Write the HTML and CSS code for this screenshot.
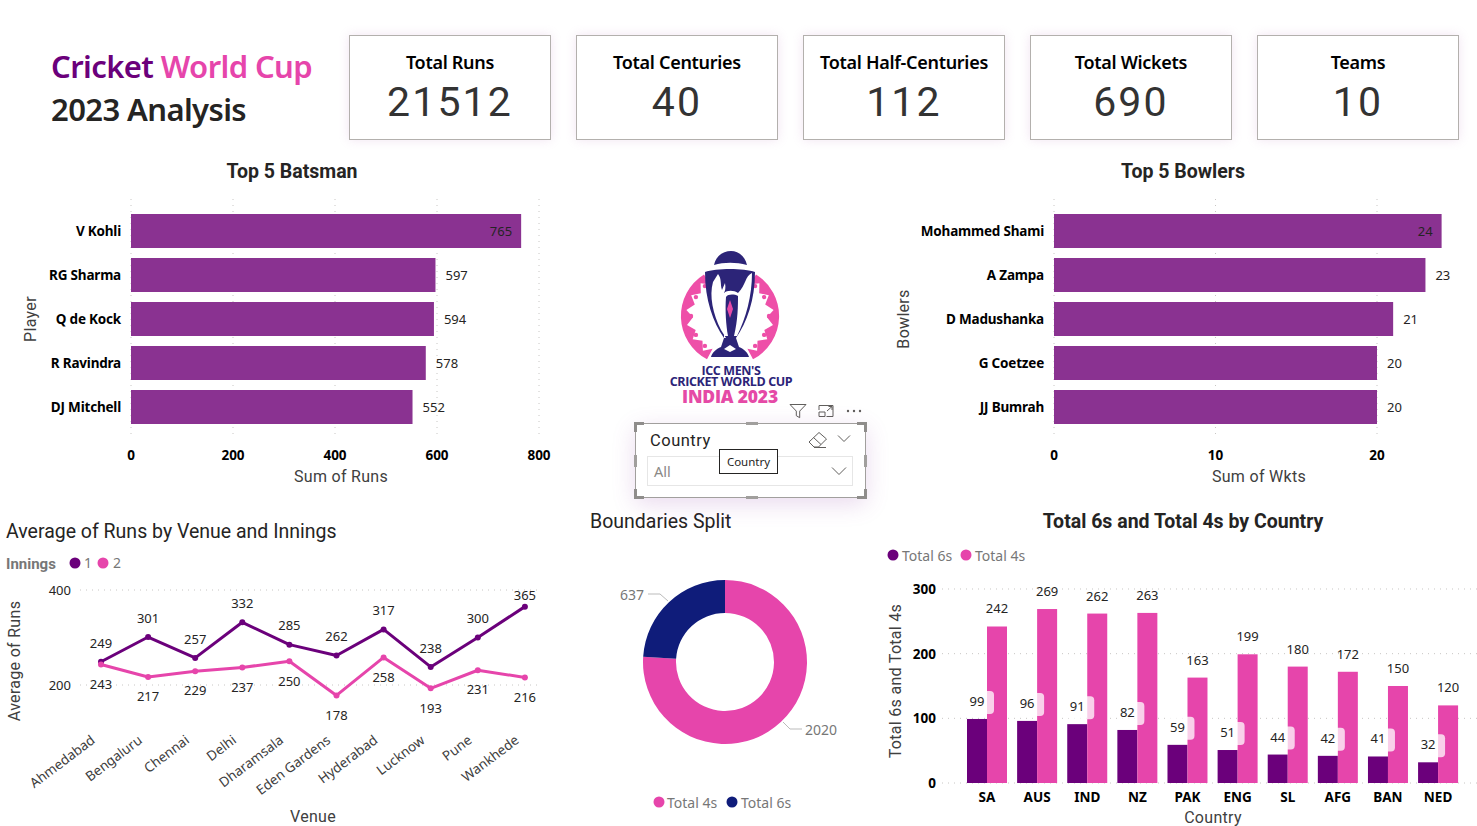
FILE: index.html
```html
<!DOCTYPE html>
<html lang="en">
<head>
    <meta charset="UTF-8">
    <meta name="viewport" content="width=device-width, initial-scale=1.0">
    <title>Cricket World Cup 2023 Analysis</title>
    <link rel="stylesheet" href="styles.css">
</head>
<body>
    <div class="top">
        <div class="heading">
            <div><span class="purple">Cricket</span> <span class="pink">World Cup</span></div>
            <div>2023 Analysis</div>
        </div>
        <div class="cards">
            <div class="card"><div class="card-label">Total Runs</div><div class="card-value">21512</div></div>
            <div class="card"><div class="card-label">Total Centuries</div><div class="card-value">40</div></div>
            <div class="card"><div class="card-label">Total Half-Centuries</div><div class="card-value">112</div></div>
            <div class="card"><div class="card-label">Total Wickets</div><div class="card-value">690</div></div>
            <div class="card"><div class="card-label">Teams</div><div class="card-value">10</div></div>
        </div>
    </div>

    <div class="board">
        <div class="panel">
            <div class="chart-title bold center batsman-title">Top 5 Batsman</div>
            <svg id="batsmen" class="chart" width="590" height="322" viewBox="0 178 590 322"></svg>
        </div>

        <div class="middle">
            <svg id="logo" width="140" height="160" viewBox="660 250 140 160"></svg>
            <div class="visual-icons">
                <svg width="18" height="16" viewBox="0 0 18 16"><path class="ico" d="M1 1.5h16l-6.3 6.6v6.6l-3.4-2v-4.6z"/></svg>
                <svg width="16" height="14" viewBox="0 0 16 14"><path class="ico" d="M1 6V1.5h14v11H8.5M1 8h6v4.500H1zM9 7l5-4.500M10.500 2.500H14V6"/></svg>
                <svg width="18" height="14" viewBox="0 0 18 14"><circle class="dot" cx="3" cy="7" r="1.200"/><circle class="dot" cx="9" cy="7" r="1.200"/><circle class="dot" cx="15" cy="7" r="1.200"/></svg>
            </div>
            <div class="slicer">
                <span class="handle tl"></span><span class="handle tc"></span><span class="handle tr"></span>
                <span class="handle ml"></span><span class="handle mr"></span>
                <span class="handle bl"></span><span class="handle bc"></span><span class="handle br"></span>
                <div class="slicer-head">
                    <span>Country</span>
                    <svg width="20" height="18" viewBox="0 0 20 18"><path class="ico" d="M1 11 11 1.500l7.500 6.500-8 8H6zM5.500 6.500 13 13.500M6 16.500h12"/></svg>
                    <svg class="chev-small" width="14" height="9" viewBox="0 0 14 9"><path class="ico" d="M1 1.500 7 7.500l6-6"/></svg>
                </div>
                <div class="slicer-box">
                    <span>All</span>
                    <svg width="16" height="10" viewBox="0 0 16 10"><path class="ico" d="M1 1.500 8 8.500l7-7"/></svg>
                </div>
                <div class="tip">Country</div>
            </div>
        </div>

        <div class="panel">
            <div class="chart-title bold center bowlers-title">Top 5 Bowlers</div>
            <svg id="bowlers" class="chart" width="597" height="322" viewBox="880 178 597 322"></svg>
        </div>

        <div class="panel">
            <div class="chart-title venue-title">Average of Runs by Venue and Innings</div>
            <svg id="venues" class="chart" width="590" height="283" viewBox="0 543 590 283"></svg>
        </div>

        <div class="panel">
            <div class="chart-title split-title">Boundaries Split</div>
            <svg id="donut" class="chart" width="290" height="291" viewBox="590 535 290 291"></svg>
        </div>

        <div class="panel">
            <div class="chart-title bold center country-title">Total 6s and Total 4s by Country</div>
            <svg id="country" class="chart" width="597" height="291" viewBox="880 535 597 291"></svg>
        </div>
    </div>

    <script src="charts.js"></script>
</body>
</html>
```

FILE: styles.css
```css
body {
    margin: 0;
    width: 1477px;
    height: 826px;
    overflow: hidden;
    background-color: #fff;
    font-family: "Noto Sans", Arial, sans-serif;
}
.top {
    display: flex;
    height: 155px;
    box-sizing: border-box;
    padding-top: 35px;
}
.heading {
    width: 349px;
    box-sizing: border-box;
    padding: 10px 0 0 51px;
    font-size: 31px;
    line-height: 43px;
    font-weight: 600;
    letter-spacing: -0.6px;
    color: #252423;
}
.purple {
    color: #6b007b;
}
.pink {
    color: #e645ab;
}
.cards {
    display: flex;
    gap: 25px;
}
.card {
    width: 202px;
    height: 105px;
    box-sizing: border-box;
    border: 1.5px solid #b3b0ad;
    box-shadow: 0 0 10px rgba(190, 120, 190, 0.2);
    text-align: center;
}
.card-label {
    margin-top: 13px;
    font-size: 18px;
    line-height: 26px;
    font-weight: 600;
    letter-spacing: -0.3px;
    color: #000;
}
.card-value {
    margin-top: 3px;
    font-family: Roboto, sans-serif;
    font-size: 41px;
    line-height: 48px;
    letter-spacing: 2.2px;
    color: #333;
}
.board {
    display: grid;
    grid-template-columns: 590px 290px 597px;
    grid-template-rows: 345px 326px;
}
.chart {
    display: block;
}
.chart-title {
    font-family: Roboto, sans-serif;
    font-size: 19.500px;
    color: #252423;
    white-space: nowrap;
}
.bold {
    font-weight: 700;
}
.batsman-title {
    height: 23px;
    margin-left: -6px;
    line-height: 33px;
    text-align: center;
}
.bowlers-title {
    height: 23px;
    margin-left: 9px;
    line-height: 33px;
    text-align: center;
}
.venue-title {
    height: 43px;
    padding: 19px 0 0 6px;
    box-sizing: border-box;
    line-height: 26px;
}
.split-title {
    height: 35px;
    line-height: 44px;
}
.country-title {
    height: 35px;
    margin-left: 9px;
    line-height: 44px;
    text-align: center;
}
.middle {
    padding: 95px 0 0 45px;
}
#logo {
    display: block;
    margin-left: 25px;
}
.visual-icons {
    display: flex;
    align-items: center;
    justify-content: flex-end;
    gap: 11px;
    width: 230px;
    height: 16px;
    margin-top: -7px;
    padding-right: 2px;
    box-sizing: border-box;
}
.ico {
    fill: none;
    stroke: #605e5c;
    stroke-width: 1;
}
.dot {
    fill: #605e5c;
}
.slicer {
    position: relative;
    width: 231px;
    height: 75px;
    margin-top: 4px;
    box-sizing: border-box;
    border: 1.5px solid #a19f9d;
    box-shadow: 0 6px 22px rgba(150, 70, 170, 0.2);
    background-color: #fff;
    padding: 0 12px 0 14px;
}
.slicer-head {
    display: flex;
    align-items: center;
    height: 32px;
    font-family: Roboto, sans-serif;
    font-size: 16.500px;
    letter-spacing: 0.5px;
    color: #252423;
}
.slicer-head span {
    flex: 1;
}
.chev-small {
    margin: -4px 2px 0 9px;
}
.slicer-box {
    display: flex;
    align-items: center;
    justify-content: space-between;
    height: 30px;
    margin: 0 0 0 -3px;
    box-sizing: border-box;
    border: 1px solid #e6e6e6;
    padding: 0 5px 0 6px;
    font-size: 14.500px;
    color: #8a8886;
}
.tip {
    position: absolute;
    left: 83px;
    top: 25px;
    width: 59px;
    height: 25px;
    box-sizing: border-box;
    border: 1px solid #252423;
    background-color: #fff;
    font-size: 11.500px;
    line-height: 23px;
    text-align: center;
    color: #252423;
}
.handle {
    position: absolute;
    background-color: #a19f9d;
}
.tl, .tr, .bl, .br {
    width: 7px;
    height: 7px;
    background-color: transparent;
    border: 0 solid #8f8d8b;
}
.tl { left: -2px; top: -2px; border-width: 3px 0 0 3px; }
.tr { right: -2px; top: -2px; border-width: 3px 3px 0 0; }
.bl { left: -2px; bottom: -2px; border-width: 0 0 3px 3px; }
.br { right: -2px; bottom: -2px; border-width: 0 3px 3px 0; }
.tc, .bc { left: 110px; width: 12px; height: 3px; }
.tc { top: -2px; }
.bc { bottom: -2px; }
.ml, .mr { top: 31px; width: 3px; height: 12px; }
.ml { left: -2px; }
.mr { right: -2px; }

/* svg text */
text {
    font-family: "Noto Sans", Arial, sans-serif;
    font-size: 13px;
    fill: #252423;
}
.cat {
    font-size: 13.500px;
    font-weight: 700;
    fill: #000;
    letter-spacing: -0.2px;
}
.tick {
    font-size: 13.500px;
    font-weight: 700;
    fill: #000;
}
.axis-title {
    font-family: Roboto, sans-serif;
    font-size: 16px;
    fill: #404040;
    letter-spacing: 0.3px;
}
.legend {
    font-size: 14px;
    fill: #777;
}
.legend-title {
    font-family: Roboto, sans-serif;
    font-size: 15px;
    font-weight: 700;
    fill: #777;
}
.muted {
    font-size: 14px;
    fill: #777;
}
.venue-tick {
    font-size: 13.500px;
    fill: #404040;
}
.grid {
    stroke: #c8c6c4;
    stroke-width: 1;
    stroke-dasharray: 1 5;
}
.logo-navy {
    font-family: "Open Sans", sans-serif;
    font-size: 12.500px;
    font-weight: 700;
    fill: #2c2478;
    letter-spacing: -0.4px;
}
.logo-pink {
    font-family: "Open Sans", sans-serif;
    font-size: 17.500px;
    font-weight: 800;
    fill: #e54aa6;
    letter-spacing: -0.2px;
}
```

FILE: charts.js
```js
var NS = "http://www.w3.org/2000/svg";
var PURPLE = "#6b007b";
var PINK = "#e645ab";
var NAVY = "#0f1c7a";
var BAR = "#8a3291";

function add(parent, tag, attrs, content) {
    var el = document.createElementNS(NS, tag);
    for (var key in attrs) {
        el.setAttribute(key, attrs[key]);
    }
    if (content !== undefined) {
        el.textContent = content;
    }
    parent.appendChild(el);
    return el;
}

function label(parent, x, y, content, cls, anchor) {
    return add(parent, "text", { x: x, y: y, "class": cls || "", "text-anchor": anchor || "middle" }, content);
}

function rotated(parent, x, y, angle, content, cls, anchor) {
    var t = label(parent, x, y, content, cls, anchor);
    t.setAttribute("transform", "rotate(" + angle + " " + x + " " + y + ")");
    return t;
}

function hbar(id, opts) {
    var svg = document.getElementById(id);
    opts.ticks.forEach(function(v) {
        var x = opts.x0 + v * opts.scale;
        add(svg, "line", { x1: x, x2: x, y1: 199, y2: 437, "class": "grid" });
        label(svg, x, 460, v, "tick");
    });
    opts.rows.forEach(function(row, i) {
        var y = 214 + i * 44;
        var w = row[1] * opts.scale;
        add(svg, "rect", { x: opts.x0, y: y, width: w, height: 34, fill: BAR });
        label(svg, opts.x0 - 10, y + 21.500, row[0], "cat", "end");
        if (i === 0) {
            label(svg, opts.x0 + w - 9, y + 21.500, row[1], "", "end");
        } else {
            label(svg, opts.x0 + w + 10, y + 21.500, row[1], "", "start");
        }
    });
    label(svg, opts.xTitle[1], 482, opts.xTitle[0], "axis-title");
    rotated(svg, opts.yTitle[1], 319, -90, opts.yTitle[0], "axis-title");
}

hbar("batsmen", {
    x0: 131, scale: 0.51, ticks: [0, 200, 400, 600, 800],
    rows: [["V Kohli", 765], ["RG Sharma", 597], ["Q de Kock", 594], ["R Ravindra", 578], ["DJ Mitchell", 552]],
    xTitle: ["Sum of Runs", 341], yTitle: ["Player", 36]
});

hbar("bowlers", {
    x0: 1054, scale: 16.15, ticks: [0, 10, 20],
    rows: [["Mohammed Shami", 24], ["A Zampa", 23], ["D Madushanka", 21], ["G Coetzee", 20], ["JJ Bumrah", 20]],
    xTitle: ["Sum of Wkts", 1259], yTitle: ["Bowlers", 909]
});

// line chart
(function() {
    var svg = document.getElementById("venues");
    var venues = ["Ahmedabad", "Bengaluru", "Chennai", "Delhi", "Dharamsala", "Eden Gardens", "Hyderabad", "Lucknow", "Pune", "Wankhede"];
    var first = [249, 301, 257, 332, 285, 262, 317, 238, 300, 365];
    var second = [243, 217, 229, 237, 250, 178, 258, 193, 231, 216];
    var firstY = [648, 623, 644, 608, 630, 641, 615, 653, 623, 600];
    var secondY = [689, 701, 695, 692, 686, 720, 682, 713, 694, 702];

    function px(i) { return 101 + i * 47.1; }
    function py(v) { return 685 - (v - 200) * 0.475; }

    label(svg, 6, 569, "Innings", "legend-title", "start");
    add(svg, "circle", { cx: 75, cy: 563, r: 5.500, fill: PURPLE });
    label(svg, 84, 568, "1", "legend", "start");
    add(svg, "circle", { cx: 103, cy: 563, r: 5.500, fill: PINK });
    label(svg, 113, 568, "2", "legend", "start");

    [[400, 590], [200, 685]].forEach(function(t) {
        add(svg, "line", { x1: 80, x2: 540, y1: t[1], y2: t[1], "class": "grid" });
        label(svg, 71, t[1] + 5, t[0], "", "end");
    });

    [[first, PURPLE], [second, PINK]].forEach(function(s) {
        var pts = s[0].map(function(v, i) { return px(i) + "," + py(v); }).join(" ");
        add(svg, "polyline", { points: pts, fill: "none", stroke: s[1], "stroke-width": 3, "stroke-linejoin": "round" });
        s[0].forEach(function(v, i) {
            add(svg, "circle", { cx: px(i), cy: py(v), r: 3, fill: s[1] });
        });
    });

    venues.forEach(function(name, i) {
        label(svg, px(i), firstY[i], first[i]);
        label(svg, px(i), secondY[i], second[i]);
        rotated(svg, px(i) - 5, 742, -37, name, "venue-tick", "end");
    });

    label(svg, 313, 822, "Venue", "axis-title");
    rotated(svg, 20, 661, -90, "Average of Runs", "axis-title");
})();

// donut
(function() {
    var svg = document.getElementById("donut");
    var cx = 725, cy = 662, outer = 82, inner = 49;
    var split = 2020 / 2657 * Math.PI * 2;

    function point(r, a) {
        return (cx + r * Math.sin(a)).toFixed(2) + " " + (cy - r * Math.cos(a)).toFixed(2);
    }
    function slice(from, to, color) {
        var large = to - from > Math.PI ? 1 : 0;
        add(svg, "path", {
            fill: color,
            d: "M" + point(outer, from) + "A" + outer + " " + outer + " 0 " + large + " 1 " + point(outer, to) +
               "L" + point(inner, to) + "A" + inner + " " + inner + " 0 " + large + " 0 " + point(inner, from) + "Z"
        });
    }
    slice(0, split, PINK);
    slice(split, Math.PI * 2, NAVY);

    add(svg, "polyline", { points: "648,594 660,594 668,601", fill: "none", stroke: "#bbb" });
    add(svg, "polyline", { points: "783,722 790,729 802,729", fill: "none", stroke: "#bbb" });
    label(svg, 632, 600, "637", "muted");
    label(svg, 821, 735, "2020", "muted");

    add(svg, "circle", { cx: 659, cy: 802, r: 5.500, fill: PINK });
    label(svg, 667, 808, "Total 4s", "legend", "start");
    add(svg, "circle", { cx: 732, cy: 802, r: 5.500, fill: NAVY });
    label(svg, 741, 808, "Total 6s", "legend", "start");
})();

// clustered columns
(function() {
    var svg = document.getElementById("country");
    var rows = [
        ["SA", 99, 242], ["AUS", 96, 269], ["IND", 91, 262], ["NZ", 82, 263], ["PAK", 59, 163],
        ["ENG", 51, 199], ["SL", 44, 180], ["AFG", 42, 172], ["BAN", 41, 150], ["NED", 32, 120]
    ];
    function py(v) { return 783 - v * 0.6467; }

    add(svg, "circle", { cx: 893, cy: 555, r: 5.500, fill: PURPLE });
    label(svg, 902, 561, "Total 6s", "legend", "start");
    add(svg, "circle", { cx: 966, cy: 555, r: 5.500, fill: PINK });
    label(svg, 975, 561, "Total 4s", "legend", "start");

    [0, 100, 200, 300].forEach(function(v) {
        add(svg, "line", { x1: 942, x2: 1477, y1: py(v), y2: py(v), "class": "grid" });
        label(svg, 936, py(v) + 5, v, "tick", "end");
    });

    rows.forEach(function(row, i) {
        var mid = 987 + i * 50.12;
        add(svg, "rect", { x: mid - 20, y: py(row[1]), width: 20, height: row[1] * 0.6467, fill: PURPLE });
        add(svg, "rect", { x: mid, y: py(row[2]), width: 20, height: row[2] * 0.6467, fill: PINK });
        // data label chip sits over the pink column
        var chipY = py(row[1]) - 28;
        add(svg, "rect", { x: mid - 20, y: chipY, width: 27, height: 23, rx: 4, fill: "#fff", "fill-opacity": 0.75 });
        label(svg, mid - 10, chipY + 15, row[1]);
        label(svg, mid + 10, py(row[2]) - 13, row[2]);
        label(svg, mid, 802, row[0], "tick");
    });

    label(svg, 1213, 823, "Country", "axis-title");
    rotated(svg, 901, 681, -90, "Total 6s and Total 4s", "axis-title");
})();

// logo
(function() {
    var svg = document.getElementById("logo");
    var cx = 730, cy = 316;

    function polar(r, deg) {
        var a = deg * Math.PI / 180;
        return (cx + r * Math.cos(a)).toFixed(1) + "," + (cy + r * Math.sin(a)).toFixed(1);
    }
    // one pink side, inner edge is a zigzag
    function side(start, end) {
        var d = "M" + polar(49, start) + "A49 49 0 0 " + (end > start ? 1 : 0) + " " + polar(49, end);
        var n = 6;
        var step = (start - end) / n;
        for (var i = 0; i <= n; i++) {
            d += "L" + polar(37, end + step * i);
            if (i < n) {
                d += "L" + polar(44, end + step * (i + 0.5));
            }
        }
        add(svg, "path", { d: d + "Z", fill: "#ee4fa8" });
    }
    side(118, 238);
    side(62, -58);
    [130, 151, 180, 209, 230, 50, 29, 0, -29, -50].forEach(function(deg) {
        var p = polar(39, deg).split(",");
        add(svg, "circle", { cx: p[0], cy: p[1], r: 2.200, fill: "#ee4fa8" });
    });

    add(svg, "path", { fill: "#2c2478", d: "M714 265C716 255 724 251 731 251C738 251 745 256 747 265C736 262 724 262 714 265Z" });
    add(svg, "path", { fill: "#2c2478", d: "M705 272C716 268 744 268 755 272C755 300 747 322 736 338L739 347C744 349 748 353 749 357H711C712 353 716 349 721 347L724 338C713 322 705 300 705 272Z" });
    add(svg, "path", { fill: "#fff", d: "M718 274C722 279 720 284 722 290L725 283C726 288 725 291 724 293V338H726L721 330C713 314 709 296 713 282Z" });
    add(svg, "path", { fill: "#fff", d: "M724 293C727 290 734 290 738 293C746 285 745 276 752 273C752 296 746 318 737 336H734C738 320 738 305 738 296C734 294 728 294 726 297C725 310 726 325 728 336H724Z" });
    add(svg, "path", { fill: "#e54aa6", d: "M730 300L733 309L730 318L727 309Z" });
    add(svg, "path", { fill: "#fff", d: "M724 349L730 345L736 349L730 352Z" });

    label(svg, 731, 375, "ICC MEN'S", "logo-navy");
    label(svg, 731, 386, "CRICKET WORLD CUP", "logo-navy");
    label(svg, 730, 403, "INDIA 2023", "logo-pink");
})();
```
